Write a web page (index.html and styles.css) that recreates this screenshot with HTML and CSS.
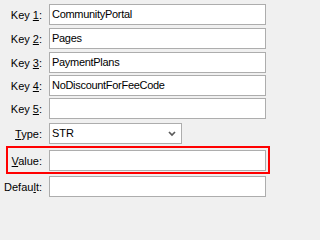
FILE: index.html
```html
<!DOCTYPE html>
<html>
<head>
<meta charset="utf-8">
<link rel="stylesheet" href="styles.css">
</head>
<body>
<div class="form">
  <div class="row">
    <span class="lbl">Key <u>1</u>:</span>
    <div class="field">CommunityPortal</div>
  </div>
  <div class="row gap3">
    <span class="lbl">Key <u>2</u>:</span>
    <div class="field">Pages</div>
  </div>
  <div class="row gap3">
    <span class="lbl">Key <u>3</u>:</span>
    <div class="field">PaymentPlans</div>
  </div>
  <div class="row">
    <span class="lbl">Key <u>4</u>:</span>
    <div class="field">NoDiscountForFeeCode</div>
  </div>
  <div class="row">
    <span class="lbl">Key <u>5</u>:</span>
    <div class="field"></div>
  </div>
  <div class="row gap4">
    <span class="lbl"><u>T</u>ype:</span>
    <div class="field select">
      <span class="sel-text">STR</span>
      <svg class="chev" width="8" height="6" viewBox="0 0 8 6"><path d="M1 1 L4 4 L7 1" fill="none" stroke="#5a5a5a" stroke-width="1.7"/></svg>
    </div>
  </div>
  <div class="highlight">
    <span class="lbl hl-lbl"><u>V</u>alue:</span>
    <div class="field"></div>
  </div>
  <div class="row">
    <span class="lbl">Defau<u>l</u>t:</span>
    <div class="field"></div>
  </div>
</div>
</body>
</html>
```
FILE: styles.css
```css
html, body {
  margin: 0;
  padding: 0;
  background: #f0f0f0;
}
body {
  width: 271px;
  height: 202px;
  overflow: hidden;
  font-family: "Liberation Sans", Arial, sans-serif;
  font-size: 11px;
  color: #000;
}
.form {
  display: flex;
  flex-direction: column;
  gap: 2px;
  padding-top: 4px;
}
.row {
  display: grid;
  grid-template-columns: 49px 217px;
  align-items: center;
}
.gap3 { margin-top: 1px; }
.gap4 { margin-top: 2px; }
.lbl {
  text-align: right;
  padding-right: 7px;
  white-space: nowrap;
}
.field {
  box-sizing: border-box;
  height: 21px;
  border: 1px solid #adadad;
  background: #fff;
  padding: 0 2px;
  line-height: 19px;
  letter-spacing: -0.3px;
  white-space: nowrap;
  overflow: hidden;
}
.select {
  width: 133px;
  display: flex;
  align-items: center;
  justify-content: space-between;
  padding-right: 5px;
}
.sel-text { letter-spacing: 0; }
.chev { display: block; }
.highlight {
  margin-left: 6px;
  width: 264px;
  box-sizing: border-box;
  border: 2px solid #ff0000;
  padding: 2px 0 1px 0;
  display: grid;
  grid-template-columns: 41px 217px;
  align-items: center;
}
.hl-lbl { padding-right: 7px; }
```
